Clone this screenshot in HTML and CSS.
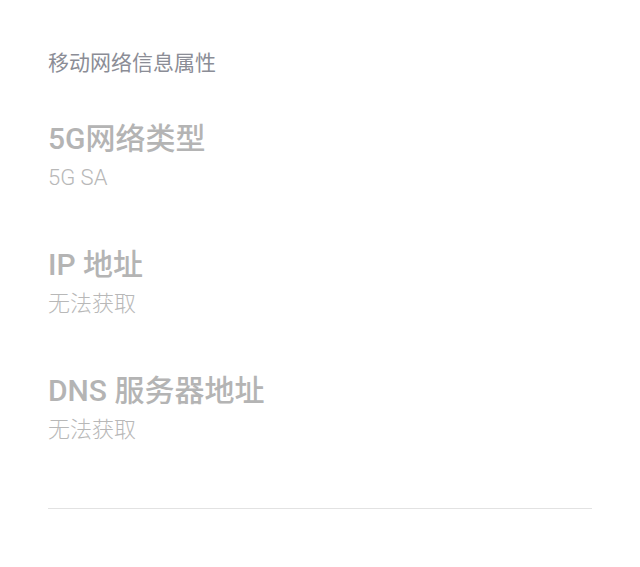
FILE: index.html
```html
<!DOCTYPE html>
<html lang="zh-CN">
  <head>
    <meta charset="UTF-8" />
    <meta name="viewport" content="width=device-width, initial-scale=1.0" />
    <title>移动网络信息属性</title>
    <link rel="stylesheet" href="styles.css">
  </head>
  <body>
    <div class="container">
      <h1 class="section-title">移动网络信息属性</h1>

      <!-- Properties -->
      <div class="prop-list">
        <div class="prop">
          <h2>5G网络类型</h2>
          <p>5G SA</p>
        </div>
        <div class="prop">
          <h2>IP 地址</h2>
          <p>无法获取</p>
        </div>
        <div class="prop">
          <h2>DNS 服务器地址</h2>
          <p>无法获取</p>
        </div>
      </div>

      <div class="divider"></div>
    </div>
  </body>
</html>
```

FILE: styles.css
```css
body {
  font-family: Roboto, "Noto Sans CJK SC", sans-serif;
  margin: 0;
  padding: 0;
  background-color: #fff;
}
.container {
  padding: 49px 48px 0;
}
.section-title {
  margin: 0;
  font-size: 21px;
  line-height: 28px;
  font-weight: 400;
  color: #8b8d96;
}
.prop-list {
  display: flex;
  flex-direction: column;
  gap: 52px;
  margin-top: 42px;
}
.prop h2 {
  margin: 0;
  font-size: 30px;
  line-height: 40px;
  font-weight: 500;
  color: #b4b4b4;
}
.prop p {
  margin: 4px 0 0;
  font-size: 22px;
  line-height: 30px;
  font-weight: 300;
  color: #b8b8b8;
}
.divider {
  margin-top: 63px;
  height: 1px;
  background: #e2e2e2;
}
```
